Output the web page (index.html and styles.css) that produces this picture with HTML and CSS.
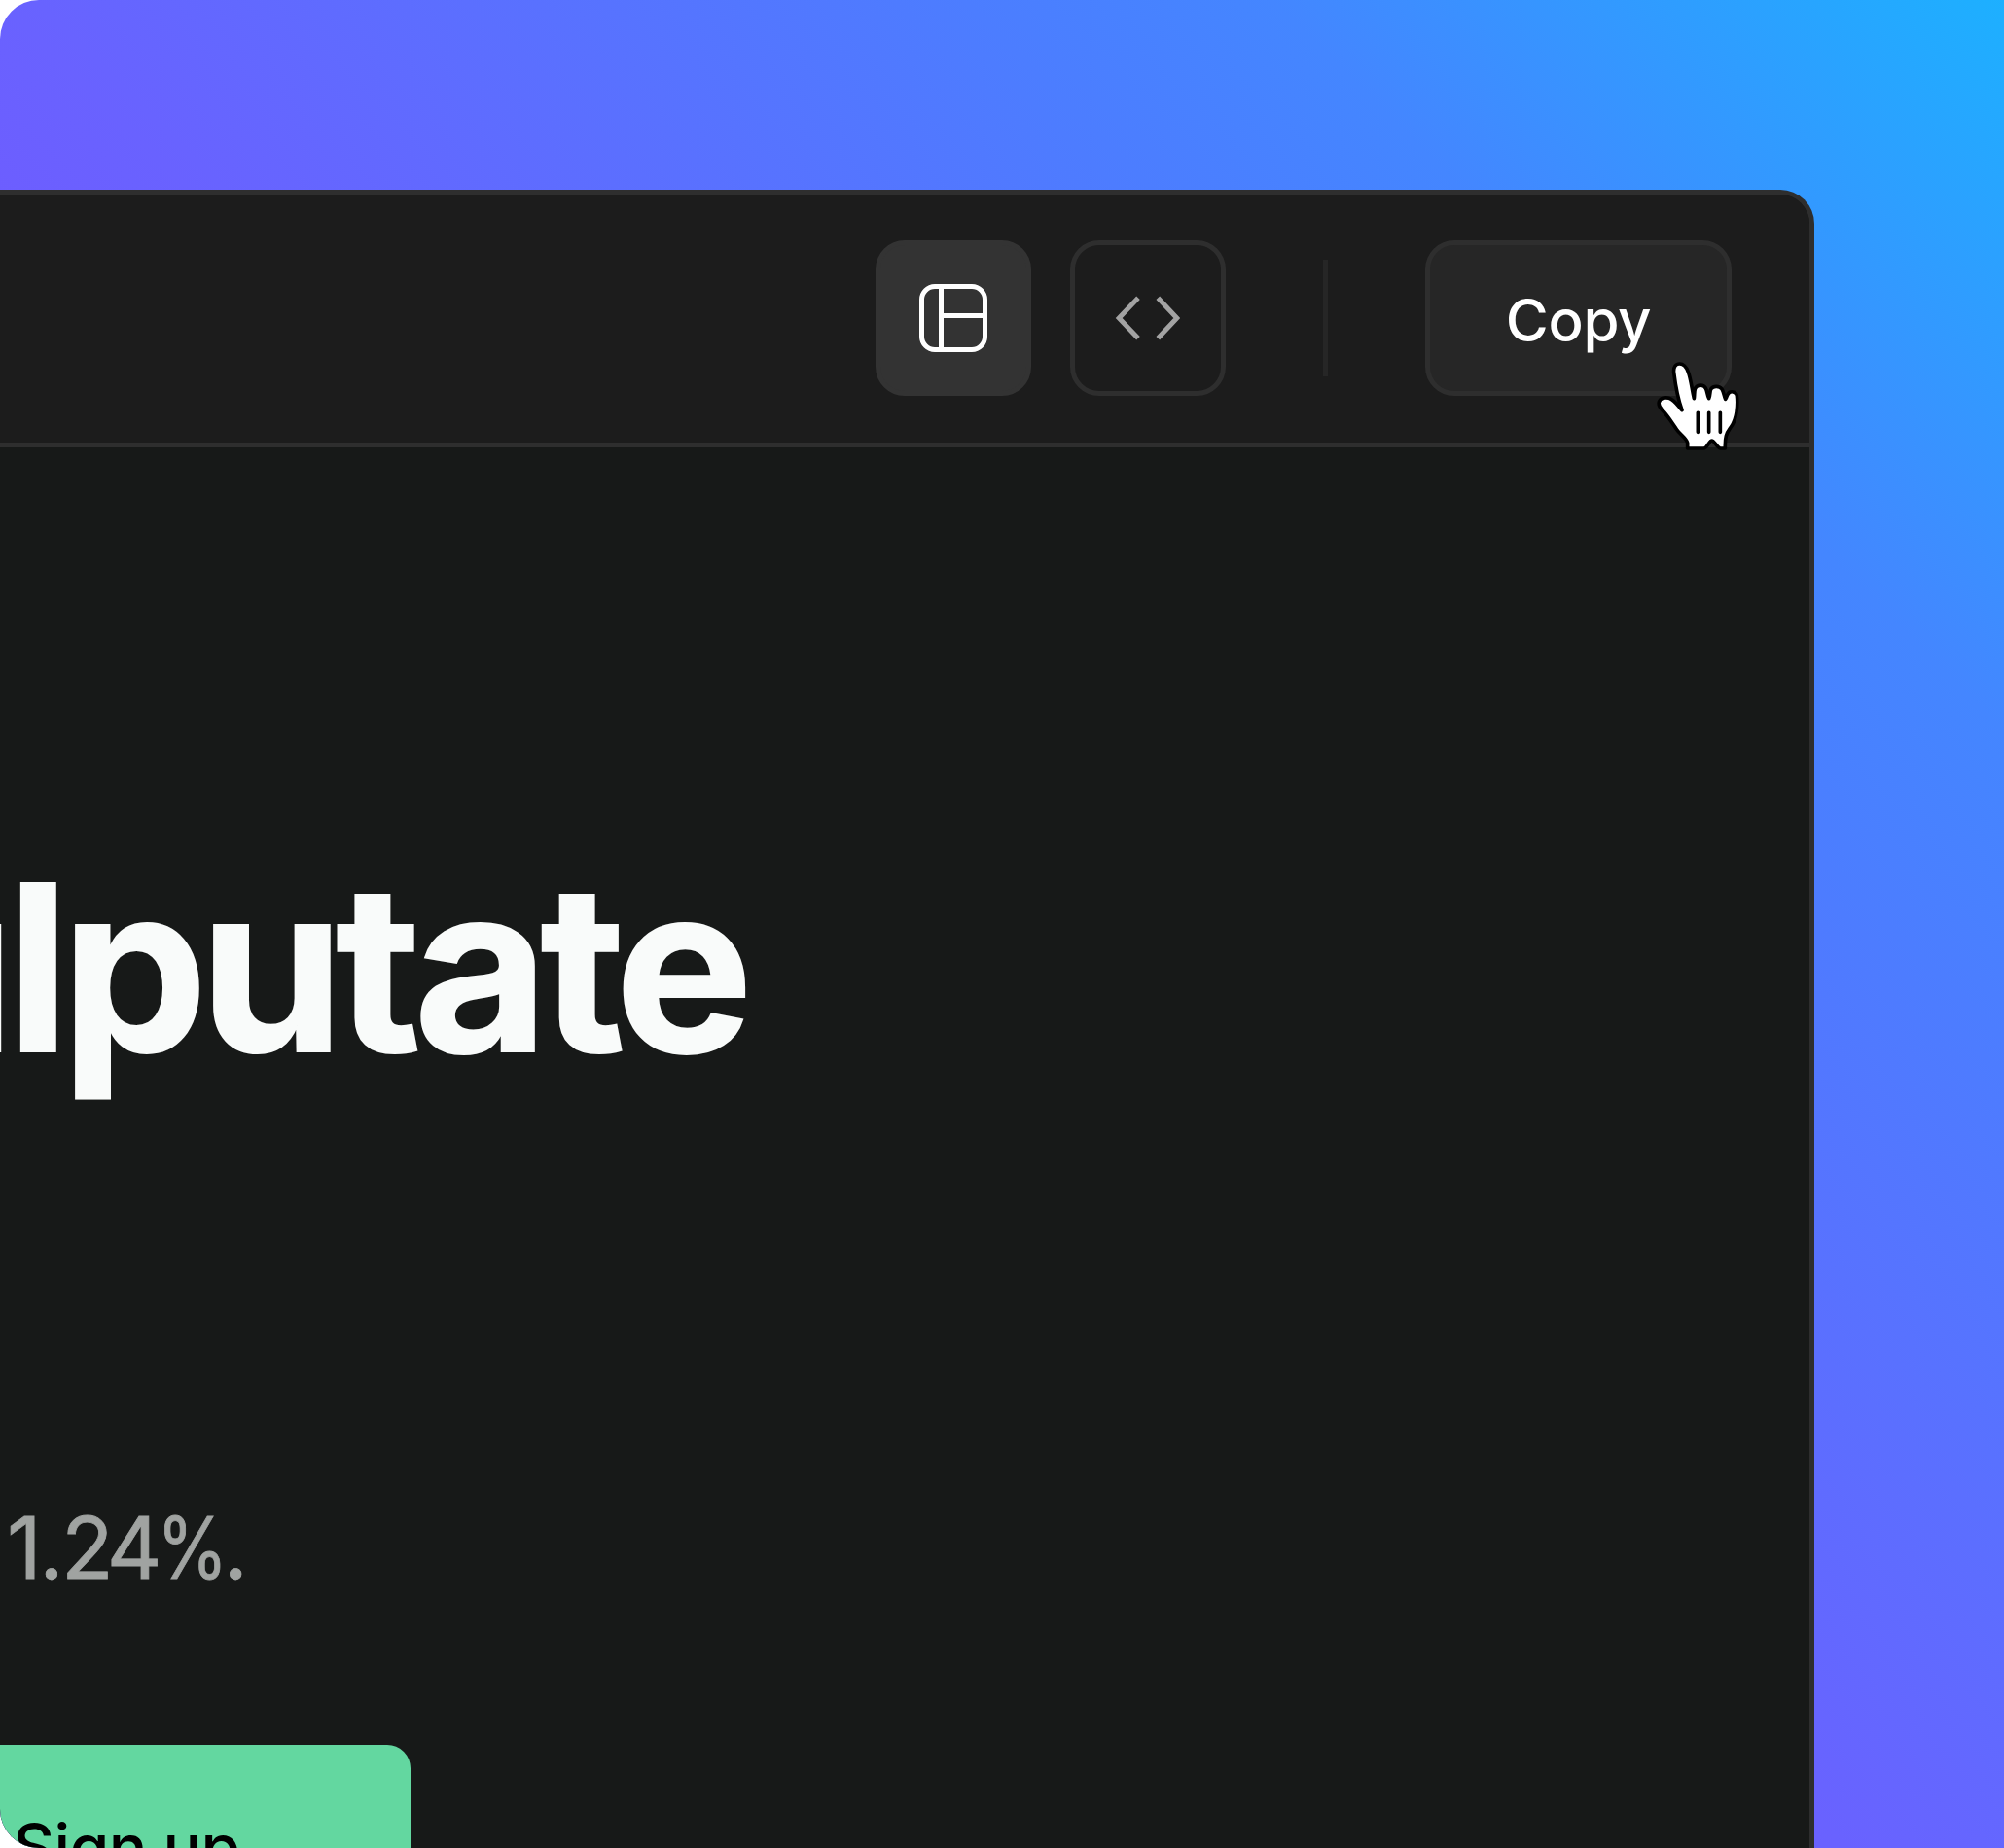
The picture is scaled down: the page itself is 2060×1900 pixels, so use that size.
FILE: index.html
```html
<!DOCTYPE html>
<html lang="en">
<head>
<meta charset="utf-8">
<title>Preview</title>
<link rel="stylesheet" href="styles.css">
</head>
<body>
<main class="stage">
  <section class="window">
    <header class="toolbar">
      <button class="tool tool-active" aria-label="Preview">
        <svg width="70" height="70" viewBox="0 0 70 70" fill="none" stroke="currentColor" stroke-width="5"><rect x="2.5" y="2.5" width="65" height="65" rx="13.5"/><path d="M22.5 2.5v65M22.5 32.5h45"/></svg>
      </button>
      <button class="tool" aria-label="Code">
        <svg width="70" height="70" viewBox="0 0 70 70" fill="none" stroke="currentColor" stroke-width="5"><path d="M25 14.2 5.2 35 25 55.8M45.3 14.2 64.8 35 45.3 55.8"/></svg>
      </button>
      <span class="separator"></span>
      <button class="copy">Copy</button>
    </header>
    <div class="page">
      <h1 class="headline">vulputate</h1>
      <p class="summary">1.<span class="digits">24</span><span class="percent">%</span>.</p>
      <a class="signup">Sign up</a>
    </div>
  </section>
  <svg class="cursor" width="110" height="110" viewBox="0 0 330 330" fill="none" stroke="#000" stroke-width="11" stroke-linecap="round" stroke-linejoin="round">
    <path fill="#fff" d="M117 185C107 157 96 102 92 69C90 51 98 42 110 42C122 42 130 51 136 67C145 91 147 119 154 149C156 138 154 126 158 117C165 105 184 106 190 117C195 126 195 140 200 149C205 139 202 126 207 119C214 109 233 110 240 120C246 129 246 141 251 151C257 144 255 136 262 131C272 125 284 130 286 140C288 155 287 177 285 191C282 212 275 228 265 241C254 256 249 269 250 303H236C226 303 217 279 209 279C201 279 194 303 184 303H134V286C131 272 112 261 101 245C86 224 73 202 56 185C49 177 43 170 46 160C50 148 65 144 77 148C93 153 106 173 117 185Z"/>
    <path d="M166 193v60M200 193v60M235 193v60"/>
  </svg>
</main>
</body>
</html>
```
FILE: styles.css
```css
* { box-sizing: border-box; }
body { margin: 0; background: #fff; font-family: Inter, sans-serif; }
button { font-family: inherit; }
.stage {
  position: relative;
  width: 2060px;
  height: 1900px;
  padding-top: 195px;
  overflow: hidden;
  border-radius: 40px 0 0 40px;
  background: linear-gradient(45deg, #8a3bff 0%, #6962ff 48%, #4c7dff 73%, #4486ff 81%, #1db0ff 100%);
}
.window {
  width: 1865px;
  height: 1800px;
  overflow: hidden;
  border: 5px solid #2e2e2e;
  border-left: 0;
  border-radius: 0 35px 0 0;
  background: #171918;
}
.toolbar {
  display: flex;
  align-items: center;
  justify-content: flex-end;
  height: 260px;
  padding: 0 80px 1px 0;
  border-bottom: 5px solid #2e2e2e;
  background: #1c1c1c;
}
.tool {
  display: flex;
  align-items: center;
  justify-content: center;
  width: 160px;
  height: 160px;
  padding: 0;
  border: 5px solid #2e2e2e;
  border-radius: 30px;
  background: none;
  color: #a3a3a3;
}
.tool-active { margin-right: 40px; border-color: #333; background: #333; color: #fff; }
.separator { width: 5px; height: 120px; margin: 0 100px; background: #262626; }
.copy {
  width: 315px;
  height: 160px;
  padding: 3px 0 0;
  border: 5px solid #2e2e2e;
  border-radius: 30px;
  background: #262626;
  color: #fff;
  font-size: 60px;
  font-weight: 500;
  letter-spacing: -0.3px;
}
.page { display: flex; flex-direction: column; align-items: flex-start; padding-top: 409px; }
.headline {
  display: flex;
  justify-content: flex-end;
  width: 766px;
  margin: 0;
  color: #f9fbfa;
  font-size: 238px;
  font-weight: 700;
  line-height: 250px;
  letter-spacing: -8.1px;
  -webkit-text-stroke: 2px #f9fbfa;
}
.summary {
  margin: 412px 0 0 7px;
  color: #a0a3a1;
  font-size: 88px;
  line-height: 120px;
  letter-spacing: -2.6px;
  -webkit-text-stroke: 0.8px #a0a3a1;
}
.digits { letter-spacing: -5.5px; }
.percent {
  display: inline-block;
  margin-right: -18px;
  letter-spacing: 0;
  transform: scaleX(0.85);
  transform-origin: left;
}
.signup {
  width: 422px;
  height: 200px;
  margin-top: 143px;
  padding: 65px 0 0 13.6px;
  border-radius: 0 24px 24px 0;
  background: #63d7a0;
  color: #000;
  font-size: 66px;
  font-weight: 500;
  letter-spacing: -0.7px;
}
.cursor { position: absolute; left: 1690px; top: 360px; }
```
